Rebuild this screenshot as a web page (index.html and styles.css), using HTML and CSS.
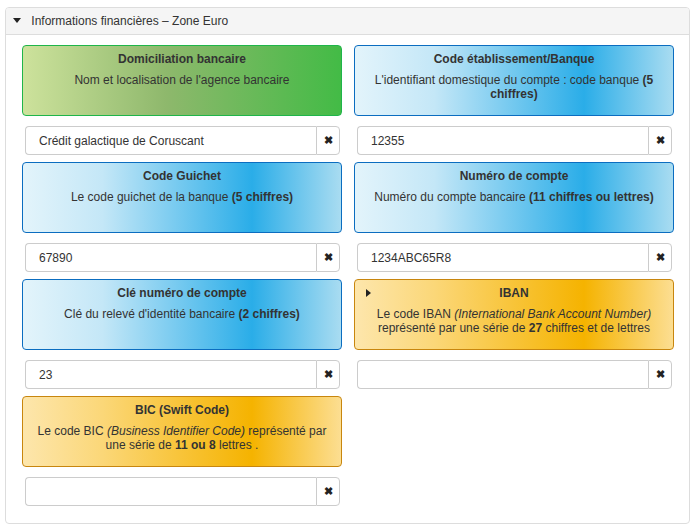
FILE: index.html
```html
<!DOCTYPE html>
<html lang="fr">

<head>
    <meta charset="UTF-8">
    <title>Informations financières</title>
    <link rel="stylesheet" href="styles.css">
</head>

<body>
    <div class="panel">
        <div class="panel-heading">
            <span class="caret-down"></span>
            Informations financières – Zone Euro
        </div>
        <div class="panel-body">
            <div class="field">
                <div class="info info-green">
                    <div class="info-title">Domiciliation bancaire</div>
                    <div class="info-text">Nom et localisation de l'agence bancaire</div>
                </div>
                <div class="input-group">
                    <input type="text" value="Crédit galactique de Coruscant">
                    <button class="clear-btn">&#10006;</button>
                </div>
            </div>
            <div class="field">
                <div class="info info-blue">
                    <div class="info-title">Code établissement/Banque</div>
                    <div class="info-text">L'identifiant domestique du compte : code banque <b>(5 chiffres)</b></div>
                </div>
                <div class="input-group">
                    <input type="text" value="12355">
                    <button class="clear-btn">&#10006;</button>
                </div>
            </div>
            <div class="field">
                <div class="info info-blue">
                    <div class="info-title">Code Guichet</div>
                    <div class="info-text">Le code guichet de la banque <b>(5 chiffres)</b></div>
                </div>
                <div class="input-group">
                    <input type="text" value="67890">
                    <button class="clear-btn">&#10006;</button>
                </div>
            </div>
            <div class="field">
                <div class="info info-blue">
                    <div class="info-title">Numéro de compte</div>
                    <div class="info-text">Numéro du compte bancaire <b>(11 chiffres ou lettres)</b></div>
                </div>
                <div class="input-group">
                    <input type="text" value="1234ABC65R8">
                    <button class="clear-btn">&#10006;</button>
                </div>
            </div>
            <div class="field">
                <div class="info info-blue">
                    <div class="info-title">Clé numéro de compte</div>
                    <div class="info-text">Clé du relevé d'identité bancaire <b>(2 chiffres)</b></div>
                </div>
                <div class="input-group">
                    <input type="text" value="23">
                    <button class="clear-btn">&#10006;</button>
                </div>
            </div>
            <div class="field">
                <div class="info info-orange">
                    <span class="caret-right"></span>
                    <div class="info-title">IBAN</div>
                    <div class="info-text">Le code IBAN <i>(International Bank Account Number)</i> représenté par une série de <b>27</b> chiffres et de lettres</div>
                </div>
                <div class="input-group">
                    <input type="text" value="">
                    <button class="clear-btn">&#10006;</button>
                </div>
            </div>
            <div class="field">
                <div class="info info-orange">
                    <div class="info-title">BIC (Swift Code)</div>
                    <div class="info-text">Le code BIC <i>(Business Identifier Code)</i> représenté par une série de <b>11 ou 8</b> lettres .</div>
                </div>
                <div class="input-group">
                    <input type="text" value="">
                    <button class="clear-btn">&#10006;</button>
                </div>
            </div>
        </div>
    </div>
</body>

</html>
```

FILE: styles.css
```css
body {
    font-family: "Liberation Sans", Arial, sans-serif;
    font-size: 12px;
    color: #333;
    margin: 7px 8px 0 5px;
    background: #fff;
}

.panel {
    border: 1px solid #ddd;
    border-radius: 4px;
    background: #fff;
}

.panel-heading {
    height: 26px;
    line-height: 26px;
    padding-left: 6px;
    background: #f5f5f5;
    border-bottom: 1px solid #ddd;
    border-radius: 3px 3px 0 0;
    font-size: 12px;
    color: #333;
}

.caret-down {
    display: inline-block;
    width: 0;
    height: 0;
    border-left: 4px solid transparent;
    border-right: 4px solid transparent;
    border-top: 5px solid #222;
    margin: 0 7px 0 1px;
    vertical-align: 2px;
}

.panel-body {
    display: grid;
    grid-template-columns: 320px 320px;
    column-gap: 12px;
    padding: 10px 15px 10px 16px;
}

.field {
    padding-bottom: 7px;
}

.info {
    position: relative;
    height: 71px;
    border: 1px solid;
    border-radius: 4px;
    text-align: center;
    padding: 6px 8px 0;
    box-sizing: border-box;
}

.info-title {
    font-weight: bold;
    line-height: 14px;
}

.info-text {
    margin-top: 7px;
    line-height: 14px;
}

.info-green {
    border-color: #1fb54a;
    background: linear-gradient(to right, #cde29c 0%, #8eb86c 45%, #43bb46 100%);
}

.info-blue {
    border-color: #0b6dc0;
    background: linear-gradient(to right, #e3f4fb 0%, #c4e7f7 25%, #2aade8 72%, #a9dcf1 100%);
}

.info-orange {
    border-color: #c8860e;
    background: linear-gradient(to right, #fde6ac 0%, #fbd778 25%, #f5b300 72%, #fcde92 100%);
}

.caret-right {
    position: absolute;
    left: 11px;
    top: 9px;
    width: 0;
    height: 0;
    border-top: 4px solid transparent;
    border-bottom: 4px solid transparent;
    border-left: 5px solid #222;
}

.input-group {
    display: flex;
    margin: 10px 2px 0 3px;
    height: 29px;
}

.input-group input {
    flex: 1;
    min-width: 0;
    border: 1px solid #ccc;
    border-right: none;
    border-radius: 4px 0 0 4px;
    padding: 0 13px;
    font-family: inherit;
    font-size: 12px;
    color: #333;
    outline: none;
}

.clear-btn {
    width: 24px;
    border: 1px solid #ccc;
    border-radius: 0 4px 4px 0;
    background: #fff;
    color: #222;
    font-size: 11px;
    font-weight: bold;
    padding: 0;
    cursor: pointer;
}
```
